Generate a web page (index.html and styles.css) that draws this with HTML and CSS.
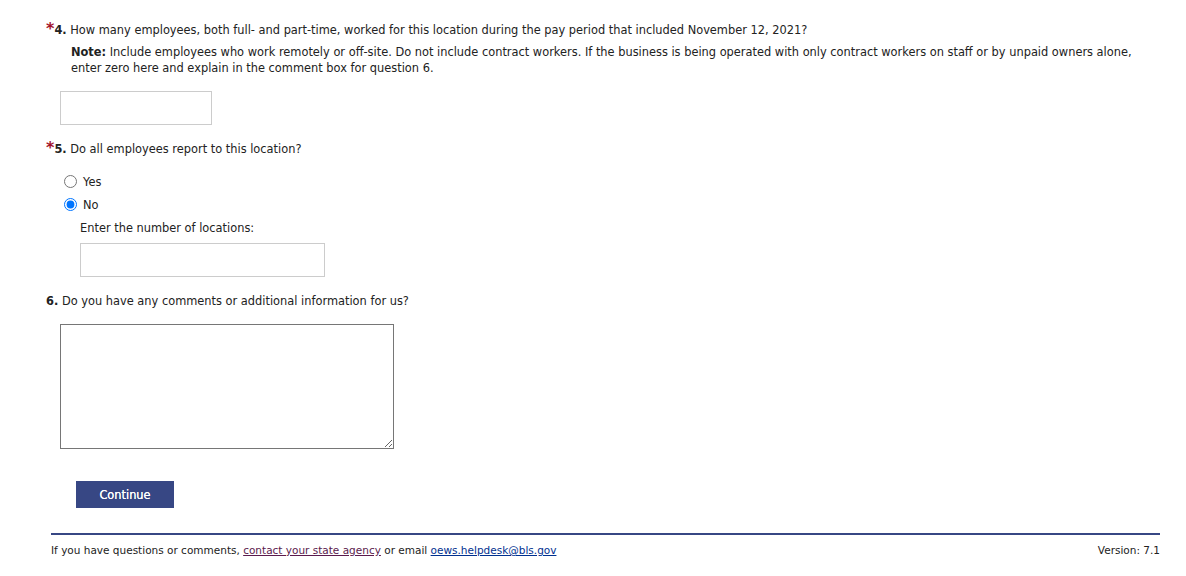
FILE: index.html
```html
<!DOCTYPE html>
<html>
<head>
<meta charset="utf-8">
<link rel="stylesheet" href="styles.css">
</head>
<body>
<div class="page">
	<div class="question">
		<p class="qtext"><span class="req">*</span><b>4.</b> How many employees, both full- and part-time, worked for this location during the pay period that included November 12, 2021?</p>
		<p class="note"><b>Note:</b> Include employees who work remotely or off-site. Do not include contract workers. If the business is being operated with only contract workers on staff or by unpaid owners alone, enter zero here and explain in the comment box for question 6.</p>
		<input type="text" class="box small">
	</div>

	<div class="question">
		<p class="qtext"><span class="req">*</span><b>5.</b> Do all employees report to this location?</p>
		<label class="radio"><input type="radio" name="q5"> Yes</label>
		<label class="radio"><input type="radio" name="q5" checked> No</label>
		<div class="sub">
			<p>Enter the number of locations:</p>
			<input type="text" class="box wide">
		</div>
	</div>

	<div class="question">
		<p class="qtext plain"><b>6.</b> Do you have any comments or additional information for us?</p>
		<textarea class="comments"></textarea>
	</div>

	<button class="continue">Continue</button>

	<div class="footer">
		<span>If you have questions or comments, <a href="#" class="visited">contact your state agency</a> or email <a href="#">oews.helpdesk@bls.gov</a></span>
		<span>Version: 7.1</span>
	</div>
</div>
</body>
</html>
```
FILE: styles.css
```css
body {
	margin: 0;
	background: #fff;
	color: #222;
	font-family: "DejaVu Sans", Verdana, sans-serif;
	font-size: 11.4px;
}

.page {
	padding: 22px 26px 0 46px;
}

p {
	margin: 0;
}

.question {
	margin-bottom: 16px;
}

.qtext {
	line-height: 16px;
}
.qtext.plain {
	margin-bottom: 15px;
}

.req {
	color: #a3122b;
	font-size: 16px;
	line-height: 10px;
	font-weight: bold;
}

.note {
	margin: 6px 0 0 25px;
	line-height: 16px;
}

.box {
	display: block;
	height: 34px;
	border: 1px solid #ccc;
	box-sizing: border-box;
	padding: 4px 6px;
	font: inherit;
}
.box.small {
	width: 152px;
	margin: 15px 0 0 14px;
}
.box.wide {
	width: 245px;
	margin-top: 8px;
}

.radio {
	display: flex;
	align-items: center;
	gap: 6px;
	margin-left: 18px;
	height: 23px;
}
.radio input {
	margin: 0;
	width: 13px;
	height: 13px;
}
.radio:first-of-type {
	margin-top: 13px;
}

.sub {
	margin: 5px 0 0 34px;
}

.comments {
	display: block;
	width: 334px;
	height: 125px;
	margin-left: 14px;
	box-sizing: border-box;
	border: 1px solid #767676;
	font: inherit;
}

.continue {
	display: block;
	margin: 32px 0 0 30px;
	width: 98px;
	height: 27px;
	border: none;
	background: #374784;
	color: #fff;
	font-family: inherit;
	font-size: 11.4px;
	text-shadow: 0 0 0.4px #fff;
}

.footer {
	margin: 25px 0 0 5px;
	border-top: 2px solid #374784;
	padding-top: 9px;
	display: flex;
	justify-content: space-between;
	font-size: 10.5px;
}

a {
	color: #00308f;
}
a.visited {
	color: #5b1a4d;
}
```
